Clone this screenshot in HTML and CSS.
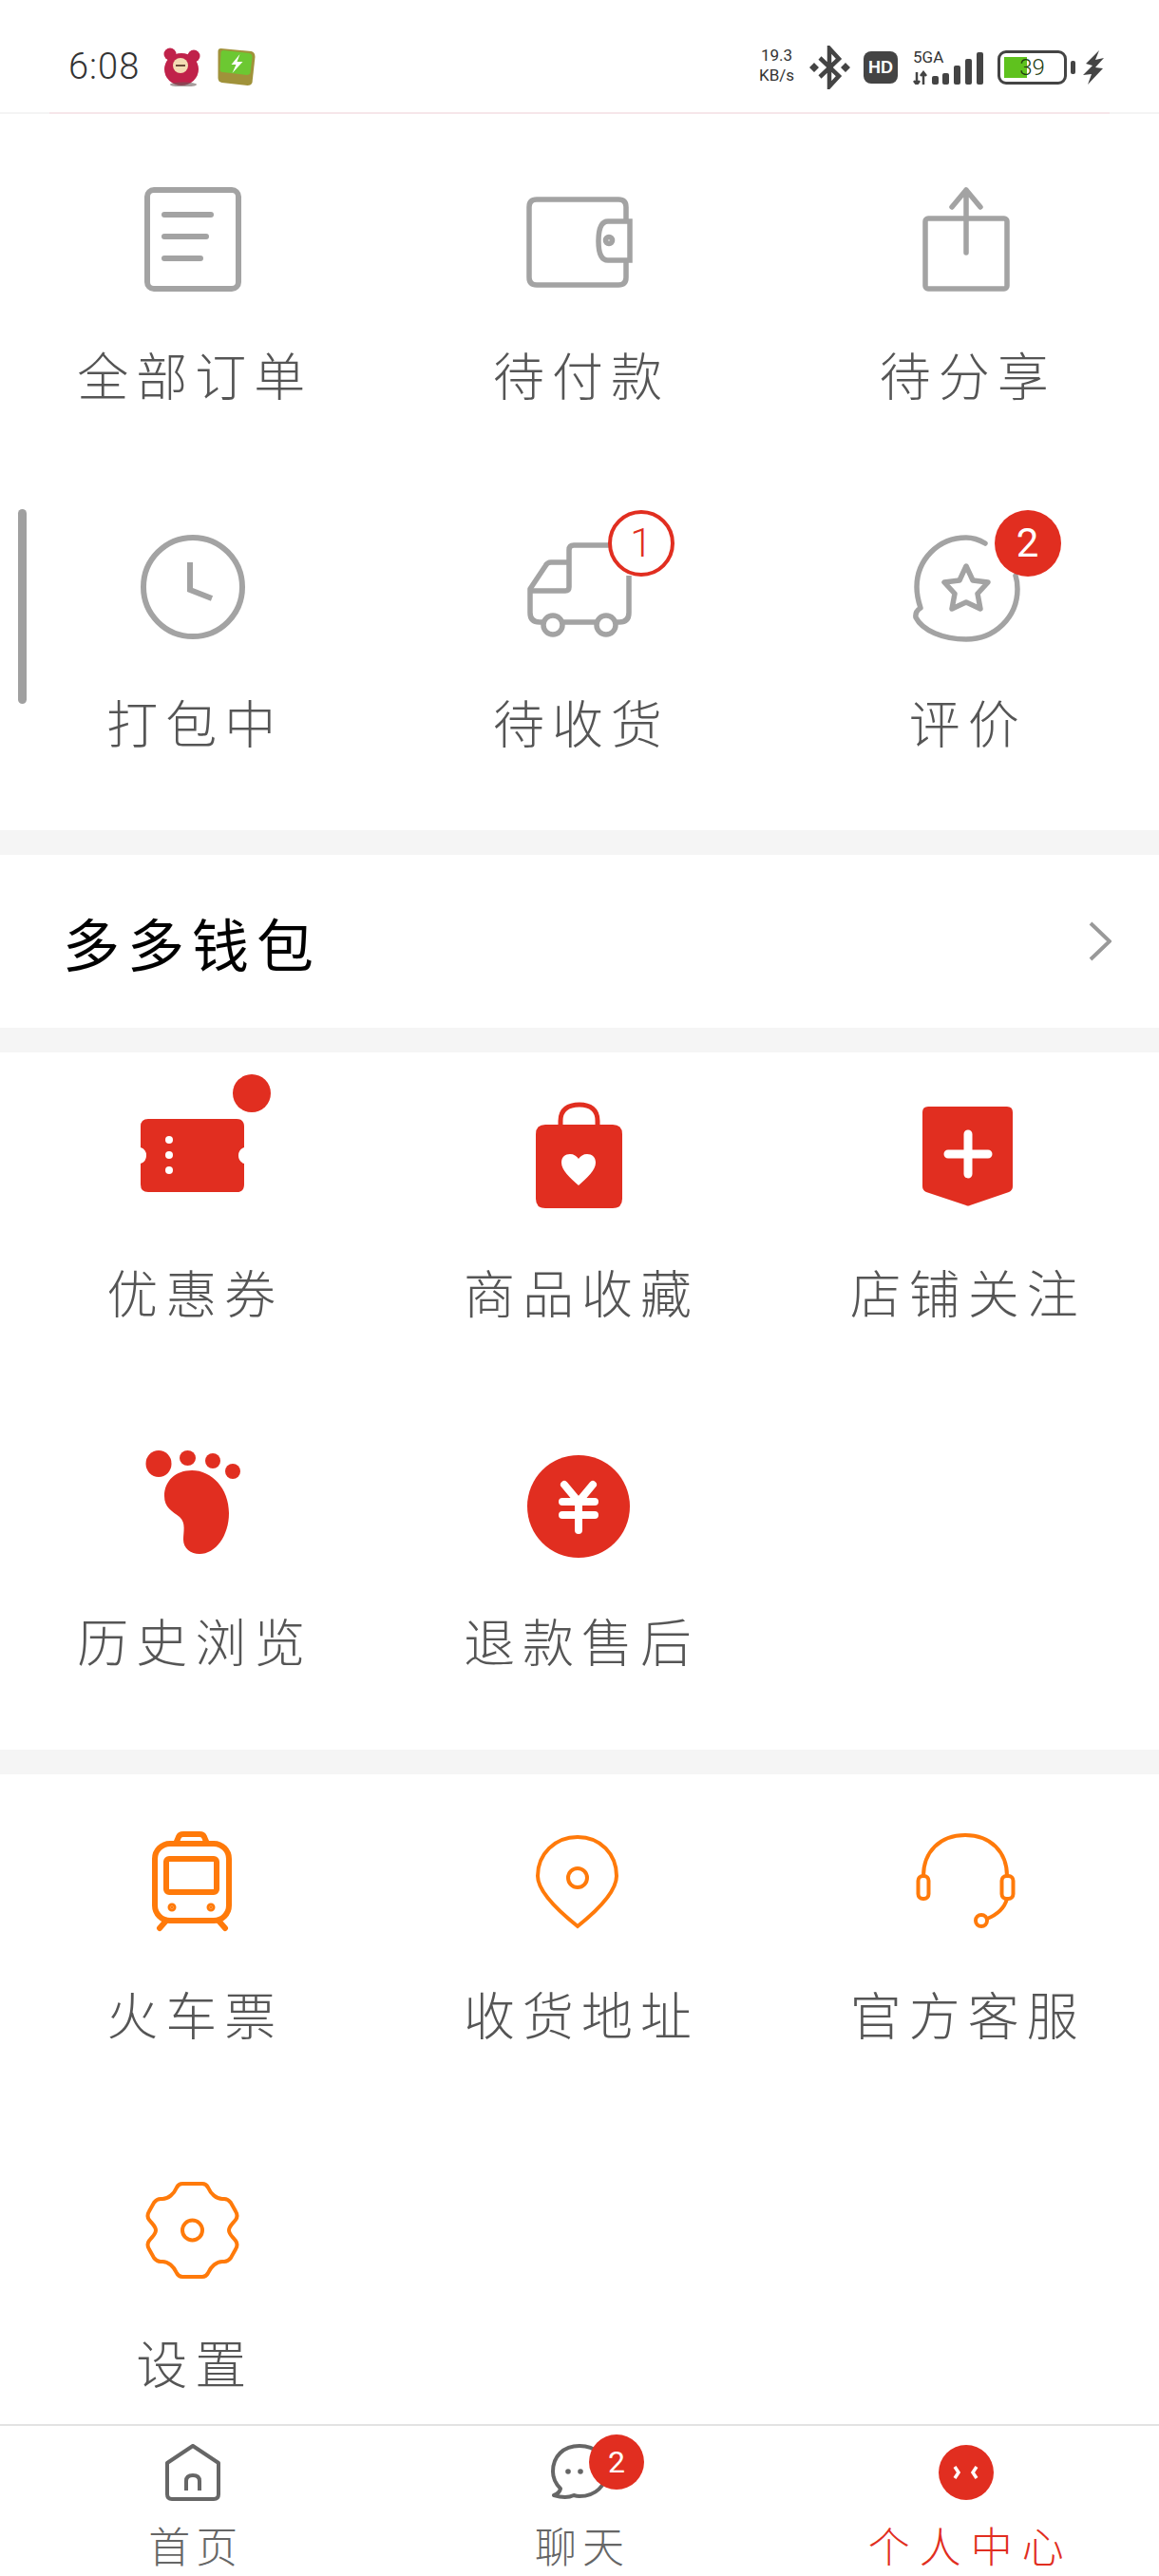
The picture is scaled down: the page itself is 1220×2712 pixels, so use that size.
FILE: index.html
```html
<!DOCTYPE html>
<html lang="zh-CN">
<head>
    <meta charset="UTF-8">
    <meta name="viewport" content="width=device-width, initial-scale=1.0">
    <title>个人中心</title>
    <link rel="stylesheet" href="styles.css">
</head>
<body>

    <div class="status-bar">
        <div class="status-left">
            <span class="time">6:08</span>
            <svg class="app-icon" viewBox="0 0 42 42">
                <circle cx="9" cy="8" r="6.500" fill="#c0224a"/>
                <circle cx="34" cy="10" r="6.500" fill="#c0224a"/>
                <ellipse cx="21" cy="24" rx="18" ry="17" fill="#c0224a"/>
                <ellipse cx="23" cy="40" rx="14" ry="2.500" fill="#6a5a5a" opacity="0.6"/>
                <circle cx="20" cy="20" r="8" fill="#f3dcb4"/>
                <rect x="15" y="19" width="10" height="2" fill="#6b4a3a"/>
            </svg>
            <svg class="app-icon app-green" viewBox="0 0 41 42">
                <path d="M4 2 L36 5 Q40 6 40 11 L37 38 Q36 41 32 41 L5 38 Q1 37 1 33 L1 5 Q1 2 4 2Z" fill="#a0923a"/>
                <path d="M7 4 L34 7 Q37 8 37 11 L35 28 Q34 30 31 30 L6 27 Q3 27 3 24 L4 7 Q4 4 7 4Z" fill="#6cc832"/>
                <path d="M24 8 L15 19 H20 L16 28 L27 16 H21Z" fill="#fff"/>
            </svg>
        </div>
        <div class="status-right">
            <div class="net-speed"><span>19.3</span><span>KB/s</span></div>
            <svg class="bt-icon" viewBox="0 0 43 46">
                <path d="M11 13 L31 32 L21 43 V3 L31 14 L11 33" fill="none" stroke="#444" stroke-width="4.500"/>
                <path d="M5 18 L10 23 L5 28 L0 23Z M38 18 L43 23 L38 28 L33 23Z" fill="#444"/>
            </svg>
            <span class="hd-icon">HD</span>
            <div class="signal">
                <span class="signal-type">5GA</span>
                <svg viewBox="0 0 74 34" width="74" height="34">
                    <path d="M4 21 V34 M1 30 L4 34 L7 30 M11 34 V21 M8 25 L11 21 L14 25" fill="none" stroke="#444" stroke-width="2.500"/>
                    <rect x="20" y="25" width="7" height="9" rx="2" fill="#444"/>
                    <rect x="31" y="22" width="7" height="12" rx="2" fill="#444"/>
                    <rect x="43" y="14" width="7" height="20" rx="2" fill="#444"/>
                    <rect x="55" y="7" width="7" height="27" rx="2" fill="#444"/>
                    <rect x="67" y="0" width="7" height="34" rx="2" fill="#444"/>
                </svg>
            </div>
            <div class="battery"><span class="battery-fill"></span><span class="battery-num">39</span></div>
            <svg class="bolt-icon" viewBox="0 0 22 36">
                <path d="M17 0 L3 14 L10 16 L0 26 L9 25 L5 36 L21 19 L13 18 L22 8 L13 10Z" fill="#444"/>
            </svg>
        </div>
    </div>

    <div class="main">
        <div class="scrollbar"></div>

        <div class="section section-orders">
            <div class="cell">
                <div class="icon-box"><div class="icon">
                    <svg viewBox="0 0 120 120" width="120" height="120" fill="none" stroke="#a3a3a3" stroke-width="6" stroke-linecap="round">
                        <rect x="12" y="8" width="96" height="104" rx="7"/>
                        <path d="M30 34 H79 M30 57 H74 M30 80 H68"/>
                    </svg>
                </div></div>
                <div class="label">全部订单</div>
            </div>
            <div class="cell">
                <div class="icon-box"><div class="icon">
                    <svg viewBox="0 0 120 120" width="120" height="120" fill="none" stroke="#a3a3a3" stroke-width="5.500" stroke-linecap="round">
                        <path d="M109 40 V26 Q109 18 101 18 H15 Q7 18 7 26 V100 Q7 108 15 108 H101 Q109 108 109 100 V84"/>
                        <path d="M113 41 V82 H90 Q80 82 80 62 Q80 41 90 41Z"/>
                        <circle cx="91" cy="61" r="3.500"/>
                    </svg>
                </div></div>
                <div class="label">待付款</div>
            </div>
            <div class="cell">
                <div class="icon-box"><div class="icon">
                    <svg viewBox="0 0 120 120" width="120" height="120" fill="none" stroke="#a3a3a3" stroke-width="5.500" stroke-linecap="round" stroke-linejoin="round">
                        <rect x="17" y="38" width="86" height="74" rx="3"/>
                        <path d="M60 74 V8 M45 26 L60 8 L75 26"/>
                    </svg>
                </div></div>
                <div class="label">待分享</div>
            </div>
            <div class="cell">
                <div class="icon-box"><div class="icon">
                    <svg viewBox="0 0 120 120" width="120" height="120" fill="none" stroke="#a3a3a3" stroke-width="6">
                        <circle cx="60" cy="60" r="52"/>
                        <path d="M57 34 V63 L80 72"/>
                    </svg>
                </div></div>
                <div class="label">打包中</div>
            </div>
            <div class="cell">
                <div class="icon-box"><div class="icon">
                    <svg viewBox="0 0 120 120" width="120" height="120" fill="none" stroke="#a3a3a3" stroke-width="5.500" stroke-linejoin="round">
                        <path d="M96 16 H54 Q49 16 49 21 V60 Q49 64 45 64 H7"/>
                        <path d="M49 34 H30 Q26 34 24 38 L8 62 V87 Q8 97 18 97 H22 M42 97 H78 M98 97 H102 Q112 97 112 87 V48"/>
                        <circle cx="32" cy="100" r="10"/>
                        <circle cx="88" cy="100" r="10"/>
                    </svg>
                    <span class="badge badge-outline">1</span>
                </div></div>
                <div class="label">待收货</div>
            </div>
            <div class="cell">
                <div class="icon-box"><div class="icon">
                    <svg viewBox="0 0 120 120" width="120" height="120" fill="none" stroke="#a3a3a3" stroke-width="5.500" stroke-linejoin="round" stroke-linecap="round">
                        <path d="M80 14 Q70 8 60 8 C30 8 8 32 8 60 Q8 70 12 82 Q6 86 7 92 C14 106 36 115 60 115 C90 115 114 92 114 62 Q114 54 112 48"/>
                        <path d="M60 38 L67 53 L83 55 L72 67 L75 83 L60 76 L45 83 L48 67 L37 55 L53 53Z"/>
                    </svg>
                    <span class="badge badge-solid">2</span>
                </div></div>
                <div class="label">评价</div>
            </div>
        </div>

        <div class="wallet-row">
            <span class="wallet-title">多多钱包</span>
            <svg class="chevron" viewBox="0 0 24 42" width="24" height="42" fill="none" stroke="#999" stroke-width="4">
                <path d="M2 2 L22 21 L2 40"/>
            </svg>
        </div>

        <div class="section">
            <div class="cell">
                <div class="icon-box"><div class="icon">
                    <svg viewBox="0 0 120 120" width="120" height="120">
                        <path d="M13 20 H106 Q114 20 114 28 V50 A9 9 0 0 0 114 67 V89 Q114 97 106 97 H13 Q5 97 5 89 V67 A9 9 0 0 0 5 50 V28 Q5 20 13 20Z" fill="#e12e20"/>
                        <circle cx="35" cy="42" r="4" fill="#fff"/>
                        <circle cx="35" cy="58" r="4" fill="#fff"/>
                        <circle cx="35" cy="74" r="4" fill="#fff"/>
                    </svg>
                    <span class="red-dot"></span>
                </div></div>
                <div class="label">优惠券</div>
            </div>
            <div class="cell">
                <div class="icon-box"><div class="icon">
                    <svg viewBox="0 0 120 120" width="120" height="120">
                        <path d="M40 28 V22 C40 10 48 5 60 5 C71 5 79 10 79 22 V28" fill="none" stroke="#e12e20" stroke-width="5"/>
                        <path d="M24 26 H95 Q105 26 105 36 V104 Q105 114 95 114 H24 Q14 114 14 104 V36 Q14 26 24 26Z" fill="#e12e20"/>
                        <path d="M59 90 C50 82 41 74 41 66 C41 60 45 57 50 57 C54 57 57 59 59 62 C61 59 64 57 68 57 C73 57 77 60 77 66 C77 74 68 82 59 90Z" fill="#fff"/>
                    </svg>
                </div></div>
                <div class="label">商品收藏</div>
            </div>
            <div class="cell">
                <div class="icon-box"><div class="icon">
                    <svg viewBox="0 0 120 120" width="120" height="120">
                        <path d="M20 7 H103 Q109 7 109 13 V91 Q109 95 105 97 L64 111 Q62 112 60 111 L18 97 Q14 95 14 91 V13 Q14 7 20 7Z" fill="#e12e20"/>
                        <path d="M41 57 H83 M62 36 V78" fill="none" stroke="#fff" stroke-width="9" stroke-linecap="round"/>
                    </svg>
                </div></div>
                <div class="label">店铺关注</div>
            </div>
            <div class="cell">
                <div class="icon-box"><div class="icon">
                    <svg viewBox="0 0 120 120" width="120" height="120" fill="#e12e20">
                        <ellipse cx="24" cy="16" rx="13.500" ry="14"/>
                        <ellipse cx="54.500" cy="10" rx="8.500" ry="8"/>
                        <ellipse cx="81" cy="13" rx="8" ry="8"/>
                        <ellipse cx="102" cy="24" rx="8" ry="8"/>
                        <path d="M59 23 C42 23 30 34 30 50 C30 62 38 66 46 72 C53 78 50 88 50 96 C50 105 58 111 67 111 C84 111 98 92 98 68 C98 42 80 23 59 23Z"/>
                    </svg>
                </div></div>
                <div class="label">历史浏览</div>
            </div>
            <div class="cell">
                <div class="icon-box"><div class="icon">
                    <svg viewBox="0 0 120 120" width="120" height="120">
                        <circle cx="59" cy="61" r="54" fill="#e12e20"/>
                        <path d="M44 38 L59 56 L74 38 M42 56 H76 M42 70 H76 M59 56 V86" fill="none" stroke="#fff" stroke-width="8" stroke-linecap="round"/>
                    </svg>
                </div></div>
                <div class="label">退款售后</div>
            </div>
        </div>

        <div class="section">
            <div class="cell">
                <div class="icon-box"><div class="icon">
                    <svg viewBox="0 0 120 120" width="120" height="120" fill="none" stroke="#ff7a0a" stroke-width="6" stroke-linecap="round">
                        <path d="M42 23 L45 16 Q46 13 50 13 H67 Q71 13 72 16 L75 23"/>
                        <rect x="20" y="23" width="78" height="81" rx="16"/>
                        <rect x="32" y="39" width="53" height="35" rx="3"/>
                        <path d="M32 104 L25 112 M87 104 L94 112"/>
                        <circle cx="38" cy="90" r="1.500" fill="#ff7a0a"/>
                        <circle cx="79" cy="90" r="1.500" fill="#ff7a0a"/>
                    </svg>
                </div></div>
                <div class="label">火车票</div>
            </div>
            <div class="cell">
                <div class="icon-box"><div class="icon">
                    <svg viewBox="0 0 120 120" width="120" height="120" fill="none" stroke="#ff7a0a" stroke-width="4">
                        <path d="M58 16 C34 16 16 34 16 57 C16 73 38 94 58 110 C78 94 99 73 99 57 C99 34 82 16 58 16Z"/>
                        <circle cx="58" cy="59" r="10"/>
                    </svg>
                </div></div>
                <div class="label">收货地址</div>
            </div>
            <div class="cell">
                <div class="icon-box"><div class="icon">
                    <svg viewBox="0 0 120 120" width="120" height="120" fill="none" stroke="#ff7a0a" stroke-width="4">
                        <path d="M15 57 C15 32 32 14 59 14 C86 14 103 32 103 57"/>
                        <rect x="9.500" y="57" width="11" height="24" rx="5"/>
                        <rect x="97.500" y="57" width="12" height="24" rx="5"/>
                        <path d="M103 81 C100 92 92 98 82 102"/>
                        <circle cx="76" cy="104" r="6"/>
                    </svg>
                </div></div>
                <div class="label">官方客服</div>
            </div>
            <div class="cell">
                <div class="icon-box"><div class="icon">
                    <svg viewBox="0 0 120 120" width="120" height="120" fill="none" stroke="#ff7a0a" stroke-width="4">
                        <g transform="translate(0 3)">
                            <path d="M49 11 H70 Q74 11 76 15 C79 22 85 27 91 27 H93 Q97 27 100 31 L105 40 Q108 45 105 49 C101 54 98 56 98 60 C98 64 101 66 105 71 Q108 75 105 80 L100 89 Q97 93 93 93 H91 C85 93 79 98 76 105 Q74 109 70 109 H49 Q45 109 43 105 C40 98 34 93 28 93 H26 Q22 93 19 89 L14 80 Q11 75 14 71 C18 66 21 64 21 60 C21 56 18 54 14 49 Q11 45 14 40 L19 31 Q22 27 26 27 H28 C34 27 40 22 43 15 Q45 11 49 11Z"/>
                            <circle cx="59.500" cy="60" r="10.500"/>
                        </g>
                    </svg>
                </div></div>
                <div class="label">设置</div>
            </div>
        </div>
    </div>

    <div class="tab-bar">
        <div class="tab">
            <div class="tab-icon">
                <svg viewBox="0 0 60 60" width="60" height="60" fill="none" stroke="#666" stroke-width="4" stroke-linejoin="round">
                    <path d="M30 2 L57 20 V53 Q57 58 52 58 H8 Q3 58 3 53 V20Z"/>
                    <path d="M23 49 V39 Q23 33 30 33 Q37 33 37 39 V49"/>
                </svg>
            </div>
            <div class="tab-label">首页</div>
        </div>
        <div class="tab">
            <div class="tab-icon">
                <svg viewBox="0 0 60 60" width="60" height="60" fill="none" stroke="#666" stroke-width="4" stroke-linejoin="round">
                    <path d="M30 2 C13 2 2 13 2 29 C2 37 6 43 10 47 Q9 52 3 54 Q16 58 24 54 Q27 55 30 55 C47 55 58 44 58 29 C58 13 47 2 30 2Z"/>
                    <circle cx="18" cy="29" r="2.800" fill="#666" stroke="none"/>
                    <circle cx="31" cy="29" r="2.800" fill="#666" stroke="none"/>
                </svg>
                <span class="badge badge-solid badge-small">2</span>
            </div>
            <div class="tab-label">聊天</div>
        </div>
        <div class="tab tab-active">
            <div class="tab-icon">
                <svg viewBox="0 0 60 60" width="60" height="60">
                    <circle cx="30" cy="30" r="29" fill="#e12e20"/>
                    <path d="M18 24 L22 30 L18 36 M41 24 L37 30 L41 36" fill="none" stroke="#fff" stroke-width="3.500"/>
                </svg>
            </div>
            <div class="tab-label">个人中心</div>
        </div>
    </div>

</body>
</html>
```

FILE: styles.css
```css
* {
    box-sizing: border-box;
}
body {
    margin: 0;
    height: 2712px;
    display: flex;
    flex-direction: column;
    overflow: hidden;
    font-family: "Noto Sans CJK SC", "Noto Sans", sans-serif;
    background-color: #fff;
    color: #555;
}

/* status bar */
.status-bar {
    position: relative;
    flex: none;
    height: 120px;
    padding: 48px 58px 0 72px;
    display: flex;
    justify-content: space-between;
    align-items: flex-start;
    border-bottom: 2px solid #f4f4f4;
}
.status-bar::after {
    content: "";
    position: absolute;
    left: 52px;
    right: 52px;
    bottom: -2px;
    height: 2px;
    background-color: #f6e6ea;
}
.status-left {
    display: flex;
    align-items: center;
    gap: 16px;
}
.time {
    width: 82px;
    font-family: Roboto, sans-serif;
    font-weight: 300;
    font-size: 38px;
    line-height: 44px;
    letter-spacing: 1px;
    color: #333;
}
.app-icon {
    width: 42px;
    height: 42px;
}
.status-right {
    display: flex;
    align-items: flex-start;
    color: #333;
}
.net-speed {
    width: 45px;
    margin-right: 12px;
    display: flex;
    flex-direction: column;
    align-items: center;
    font-family: Roboto, sans-serif;
    font-size: 17px;
    line-height: 21px;
}
.bt-icon {
    width: 43px;
    height: 46px;
    margin-right: 14px;
}
.hd-icon {
    width: 36px;
    height: 34px;
    margin: 6px 16px 0 0;
    border-radius: 8px;
    background-color: #444;
    color: #fff;
    font-family: "Liberation Sans", sans-serif;
    font-weight: bold;
    font-size: 18px;
    line-height: 34px;
    text-align: center;
}
.signal {
    position: relative;
    width: 74px;
    height: 34px;
    margin: 7px 15px 0 0;
}
.signal-type {
    position: absolute;
    left: 0;
    top: -4px;
    font-family: Roboto, sans-serif;
    font-size: 17px;
    line-height: 18px;
}
.battery {
    position: relative;
    width: 73px;
    height: 36px;
    margin: 5px 17px 0 0;
    border: 3px solid #444;
    border-radius: 9px;
    text-align: center;
    font-family: Roboto, sans-serif;
    font-weight: 300;
    font-size: 24px;
    line-height: 30px;
}
.battery::after {
    content: "";
    position: absolute;
    right: -12px;
    top: 8px;
    width: 5px;
    height: 14px;
    border-radius: 2px;
    background-color: #444;
}
.battery-fill {
    position: absolute;
    left: 4px;
    top: 4px;
    bottom: 4px;
    width: 24px;
    background-color: #5fc21e;
}
.battery-num {
    position: relative;
    color: #1d3d10;
}
.bolt-icon {
    width: 22px;
    height: 36px;
    margin-top: 5px;
}

/* page content */
.main {
    position: relative;
    flex: 1;
    min-height: 0;
    overflow: hidden;
    display: flex;
    flex-direction: column;
    gap: 26px;
    background-color: #f5f5f5;
}
.scrollbar {
    position: absolute;
    left: 19px;
    top: 416px;
    width: 9px;
    height: 205px;
    border-radius: 5px;
    background-color: #a0a0a0;
}
.section {
    flex: none;
    display: grid;
    grid-template-columns: repeat(3, 1fr);
    grid-auto-rows: 367px;
    background-color: #fff;
}
.section-orders {
    padding-top: 22px;
    grid-auto-rows: 366px;
}
.cell {
    display: flex;
    flex-direction: column;
    align-items: center;
}
.icon-box {
    height: 220px;
    display: flex;
    align-items: center;
    justify-content: center;
}
.icon {
    position: relative;
    width: 120px;
    height: 120px;
}
.icon svg {
    display: block;
}
.label {
    padding-left: 4px;
    font-size: 54px;
    line-height: 64px;
    letter-spacing: 8px;
    font-weight: 300;
    white-space: nowrap;
}

/* badges */
.badge {
    position: absolute;
    left: 90px;
    top: -21px;
    width: 70px;
    height: 70px;
    border-radius: 50%;
    font-family: Roboto, sans-serif;
    font-size: 42px;
    line-height: 70px;
    text-align: center;
}
.badge-outline {
    border: 4px solid #e12e20;
    background-color: #fff;
    color: #e12e20;
    font-weight: 300;
    line-height: 62px;
}
.badge-solid {
    background-color: #e12e20;
    color: #fff;
}
.badge-small {
    left: 40px;
    top: -10px;
    width: 58px;
    height: 58px;
    font-size: 32px;
    line-height: 58px;
}
.red-dot {
    position: absolute;
    left: 102px;
    top: -27px;
    width: 40px;
    height: 40px;
    border-radius: 50%;
    background-color: #e12e20;
}

/* wallet row */
.wallet-row {
    flex: none;
    height: 182px;
    padding: 0 50px 0 66px;
    display: flex;
    align-items: center;
    justify-content: space-between;
    background-color: #fff;
}
.wallet-title {
    font-size: 60px;
    letter-spacing: 8px;
    color: #000;
}

/* bottom tabs */
.tab-bar {
    flex: none;
    height: 160px;
    display: grid;
    grid-template-columns: repeat(3, 1fr);
    border-top: 2px solid #e2e2e2;
    background-color: #fff;
}
.tab {
    padding-top: 19px;
    display: flex;
    flex-direction: column;
    align-items: center;
}
.tab-icon {
    position: relative;
    width: 60px;
    height: 60px;
}
.tab-icon svg {
    display: block;
}
.tab-label {
    margin-top: 18px;
    padding-left: 6px;
    font-size: 44px;
    line-height: 56px;
    letter-spacing: 6px;
    font-weight: 300;
    color: #666;
    white-space: nowrap;
}
.tab-active .tab-label {
    padding-left: 10px;
    letter-spacing: 10px;
    color: #e12e20;
}
```
